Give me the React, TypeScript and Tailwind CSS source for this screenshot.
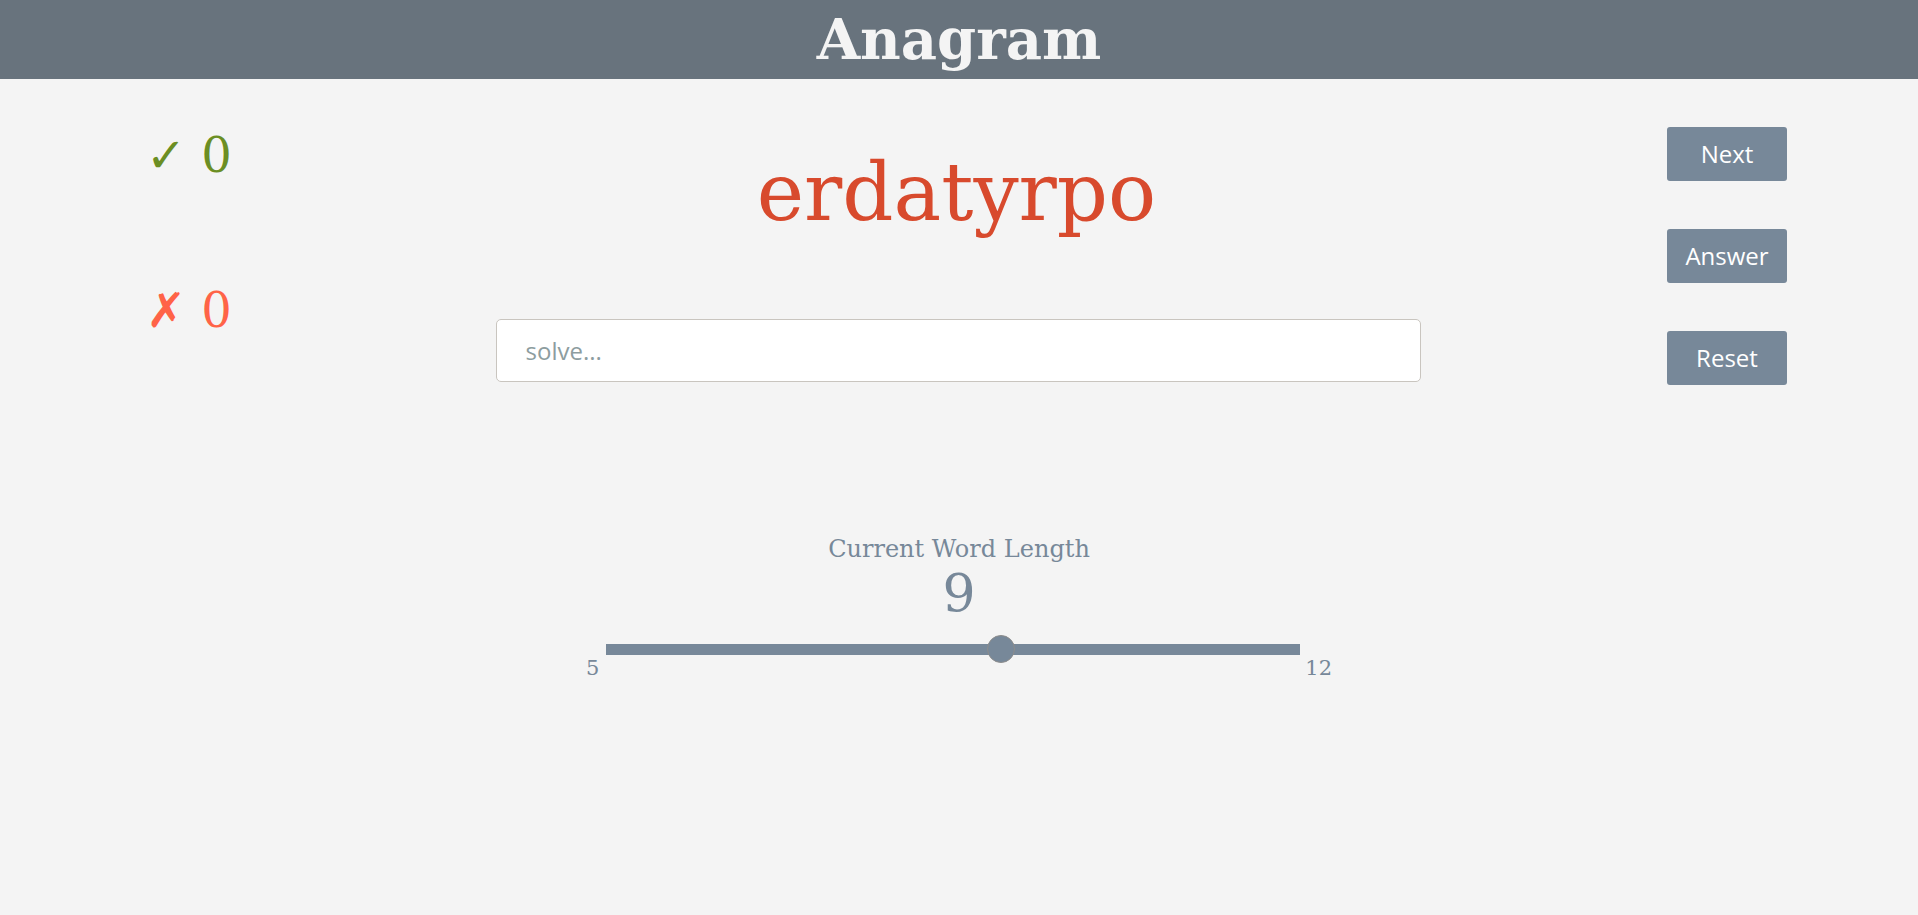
import React, { useState } from 'react';

const serif = "font-['DejaVu_Serif',serif]";
const sans = "font-['Open_Sans',sans-serif]";

const ScoreLine: React.FC<{ mark: string; value: number; color: string }> = ({ mark, value, color }) => (
  <div className={`${serif} text-[48px] leading-[56px] ${color}`}>
    {mark} {value}
  </div>
);

const ActionButton: React.FC<{ label: string }> = ({ label }) => (
  <button
    className={`${sans} w-[120px] h-[54px] rounded-[3px] bg-[#778899] text-white text-[24px] leading-none`}
  >
    {label}
  </button>
);

const LengthSlider: React.FC<{ min: number; max: number; value: number }> = ({ min, max, value }) => {
  const trackWidth = 694;
  const thumb = 28;
  const left = ((value - min) / (max - min)) * (trackWidth - thumb);
  return (
    <div className="flex flex-col items-center">
      <div className={`${serif} text-[24px] leading-[28px] text-[#778899]`}>Current Word Length</div>
      <div className={`${serif} text-[52px] leading-[60px] text-[#778899]`}>{value}</div>
      <div className="mt-[12px] flex items-start">
        <span className={`${serif} text-[21px] leading-[24px] text-[#778899] mt-[21px] mr-[7px]`}>{min}</span>
        <div className="relative w-[694px] h-[28px] flex items-center">
          <div className="w-full h-[11px] bg-[#778899]"></div>
          <div
            className="absolute top-0 w-[28px] h-[28px] rounded-full bg-[#778899] border border-[#8c8c8c]"
            style={{ left }}
          ></div>
        </div>
        <span className={`${serif} text-[21px] leading-[24px] text-[#778899] mt-[21px] ml-[5px]`}>{max}</span>
      </div>
    </div>
  );
};

export default function App() {
  const [guess, setGuess] = useState('');

  return (
    <div className="min-h-[915px] bg-[#f4f4f4]">
      {/* Header */}
      <header className="h-[79px] bg-[#68737d] flex items-center justify-center">
        <h1 className={`${serif} text-[56px] leading-[65px] font-bold text-[#f4f4f4]`}>Anagram</h1>
      </header>

      <main className="grid grid-cols-[1fr_924px_1fr] pt-[48px]">
        {/* Score */}
        <div className="pl-[146px] flex flex-col gap-[99px]">
          <ScoreLine mark="✓" value={0} color="text-[#6b8e23]" />
          <ScoreLine mark="✗" value={0} color="text-[#ff6347]" />
        </div>

        {/* Puzzle */}
        <div className="flex flex-col items-center">
          <div className={`${serif} mt-[19px] mr-[5px] text-[80px] leading-[93px] text-[#d84a2d]`}>erdatyrpo</div>
          <input
            value={guess}
            onChange={(e) => setGuess(e.target.value)}
            placeholder="solve..."
            className={`${sans} mt-[80px] w-[925px] -ml-[2px] h-[63px] bg-white border border-[#c9c5bf] rounded-[5px] pl-[29px] text-[24px] text-[#333] placeholder:text-[#8d9d9f] outline-none`}
          />
          <div className="mt-[153px]">
            <LengthSlider min={5} max={12} value={9} />
          </div>
        </div>

        {/* Actions */}
        <div className="pr-[131px] flex flex-col items-end gap-[48px]">
          <ActionButton label="Next" />
          <ActionButton label="Answer" />
          <ActionButton label="Reset" />
        </div>
      </main>
    </div>
  );
}
